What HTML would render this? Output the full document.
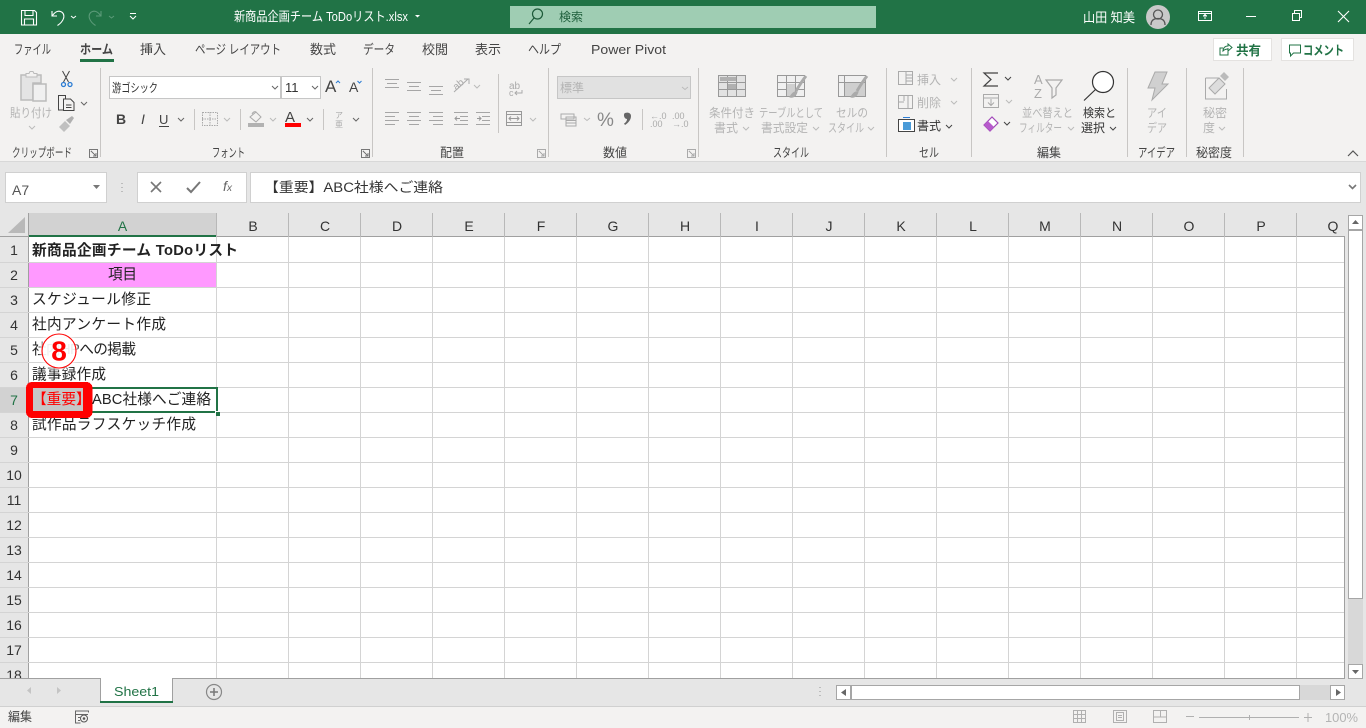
<!DOCTYPE html>
<html lang="ja"><head><meta charset="utf-8"><title>Excel</title>
<style>
html,body{margin:0;padding:0;width:1366px;height:728px;overflow:hidden;background:#fff}
svg{position:absolute;left:0;top:0;display:block}
text{font-family:"Liberation Sans","Noto Sans CJK JP",sans-serif;white-space:pre}
.u{font-size:12.5px;fill:#444}
.t{font-size:13px;fill:#444}
.d{font-size:12px;fill:#b4b4b4}
.c{font-size:14.67px;fill:#222}
.h{font-size:14px;fill:#333;text-anchor:middle}
.l{fill:none;stroke:#444;stroke-width:1}
.g{fill:none;stroke:#a6a6a6;stroke-width:1}
.s{stroke:#c6c6c6;stroke-width:1;fill:none}
.a{fill:none;stroke:#666;stroke-width:1}
.ag{fill:none;stroke:#bbb;stroke-width:1}
</style></head><body>
<svg width="1366" height="728" viewBox="0 0 1366 728" shape-rendering="crispEdges">
<defs><filter id="b" x="-30%" y="-30%" width="160%" height="160%"><feGaussianBlur stdDeviation="1.500"/></filter></defs>
<!-- backgrounds -->
<rect width="1366" height="728" fill="#fff"/>
<rect width="1366" height="34" fill="#217346"/>
<rect y="34" width="1366" height="127" fill="#f3f2f1"/>
<rect y="161" width="1366" height="52" fill="#e6e6e6"/>
<rect y="213" width="1366" height="24" fill="#e6e6e6"/>
<rect y="237" width="28" height="442" fill="#e6e6e6"/>
<rect x="1345" y="213" width="21" height="466" fill="#e6e6e6"/>

<!-- title bar -->
<g shape-rendering="auto">
<g fill="none" stroke="#fff" stroke-width="1.100">
<path d="M21.500 10.500h13l2 2v12.500h-15z"/><path d="M25 10.500v5h8v-5"/><path d="M24.500 25v-6h9v6"/>
<path d="M52 11v5h5M52.500 15.500c2-3 5-5 8-4 3 1 4 4 3 7-1 3-3 5-6 7"/>
<path d="M71 16l2.500 2 2.500-2" stroke-width="1"/>
<g stroke="#5b9a78"><path d="M101 11v5h-5M100.500 15.500c-2-3-5-5-8-4-3 1-4 4-3 7 1 3 3 5 6 7"/><path d="M109 16l2.500 2 2.500-2" stroke-width="1"/></g>
<path d="M130 13.500h6M130 16l3 3 3-3" stroke-width="1"/>
</g>
<text x="234" y="21" font-size="13" fill="#fff" textLength="174" lengthAdjust="spacingAndGlyphs">新商品企画チーム ToDoリスト.xlsx</text>
<path d="M415 15h5l-2.500 2.500z" fill="#fff"/>
</g>
<rect x="510" y="6" width="366" height="22" fill="#9fcdb3"/>
<g shape-rendering="auto">
<circle cx="537.500" cy="14" r="5" fill="none" stroke="#1d5a39" stroke-width="1.200"/><path d="M534 18l-5 6" stroke="#1d5a39" stroke-width="1.200"/>
<text x="559" y="21" font-size="12" fill="#1f5f3c" textLength="24" lengthAdjust="spacingAndGlyphs">検索</text>
<text x="1083" y="22" font-size="13" fill="#fff" textLength="52" lengthAdjust="spacingAndGlyphs">山田 知美</text>
<circle cx="1158" cy="17" r="12" fill="#c9c9c9"/>
<circle cx="1158" cy="14.500" r="4.500" fill="none" stroke="#555" stroke-width="1.300"/>
<path d="M1151 25c0-5 3-6.500 7-6.500s7 1.500 7 6.500" fill="none" stroke="#555" stroke-width="1.300"/>
<path d="M1338 11l11 11M1349 11l-11 11" stroke="#fff" stroke-width="1.100"/>
</g>
<g fill="none" stroke="#fff">
<path d="M1198.500 11.500h13v9h-13zM1198.500 13.500h13"/><path d="M1205 19v-4M1203 16.500l2-2 2 2"/>
<path d="M1246 16.500h10"/>
<path d="M1292.500 13.500h7v7h-7zM1294.500 13v-2.500h7v7h-2"/>
</g>

<!-- tabs -->
<g shape-rendering="auto">
<text class="t" x="14" y="54" textLength="37" lengthAdjust="spacingAndGlyphs">ファイル</text>
<text class="t" x="80" y="54" font-weight="700" textLength="33" lengthAdjust="spacingAndGlyphs">ホーム</text>
<text class="t" x="140" y="54" textLength="26" lengthAdjust="spacingAndGlyphs">挿入</text>
<text class="t" x="195" y="54" textLength="86" lengthAdjust="spacingAndGlyphs">ページ レイアウト</text>
<text class="t" x="310" y="54" textLength="26" lengthAdjust="spacingAndGlyphs">数式</text>
<text class="t" x="363" y="54" textLength="32" lengthAdjust="spacingAndGlyphs">データ</text>
<text class="t" x="422" y="54" textLength="26" lengthAdjust="spacingAndGlyphs">校閲</text>
<text class="t" x="475" y="54" textLength="26" lengthAdjust="spacingAndGlyphs">表示</text>
<text class="t" x="528" y="54" textLength="33" lengthAdjust="spacingAndGlyphs">ヘルプ</text>
<text x="591" y="54" font-size="13" fill="#444" textLength="75" lengthAdjust="spacingAndGlyphs">Power Pivot</text>
</g>
<rect x="80" y="59" width="34" height="3" fill="#217346"/>

<!-- share + comment -->
<rect x="1213.500" y="38.500" width="58" height="22" fill="#fff" stroke="#e4e2e0"/>
<rect x="1281.500" y="38.500" width="72" height="22" fill="#fff" stroke="#e4e2e0"/>
<g shape-rendering="auto">
<path d="M1228 48v7h-8v-7h3M1223 51c0-3 2-5 5-5v-2l4 3.500-4 3.500v-2c-2 0-4 1-5 2z" fill="none" stroke="#217346"/>
<text x="1236" y="55" font-size="13" font-weight="700" fill="#217346" textLength="25" lengthAdjust="spacingAndGlyphs">共有</text>
<path d="M1289.500 45h11v8h-7l-3 3v-3h-1z" fill="none" stroke="#217346"/>
<text x="1303" y="55" font-size="13" font-weight="700" fill="#217346" textLength="41" lengthAdjust="spacingAndGlyphs">コメント</text>
</g>

<!-- ribbon separators -->
<g fill="#c8c6c4">
<rect x="100" y="68" width="1" height="89"/><rect x="372" y="68" width="1" height="89"/><rect x="548" y="68" width="1" height="89"/><rect x="698" y="68" width="1" height="89"/><rect x="886" y="68" width="1" height="89"/><rect x="971" y="68" width="1" height="89"/><rect x="1127" y="68" width="1" height="89"/><rect x="1186" y="68" width="1" height="89"/><rect x="1243" y="68" width="1" height="89"/>
<rect x="498" y="74" width="1" height="59"/>
<rect x="194" y="109" width="1" height="21"/><rect x="240" y="109" width="1" height="21"/><rect x="323" y="109" width="1" height="21"/><rect x="642" y="109" width="1" height="21"/>
</g>

<!-- group labels -->
<g shape-rendering="auto">
<text class="u" x="12" y="157" textLength="60" lengthAdjust="spacingAndGlyphs">クリップボード</text>
<text class="u" x="212" y="157" textLength="33" lengthAdjust="spacingAndGlyphs">フォント</text>
<text class="u" x="440" y="157" textLength="24" lengthAdjust="spacingAndGlyphs">配置</text>
<text class="u" x="603" y="157" textLength="24" lengthAdjust="spacingAndGlyphs">数値</text>
<text class="u" x="773" y="157" textLength="36" lengthAdjust="spacingAndGlyphs">スタイル</text>
<text class="u" x="919" y="157" textLength="20" lengthAdjust="spacingAndGlyphs">セル</text>
<text class="u" x="1037" y="157" textLength="24" lengthAdjust="spacingAndGlyphs">編集</text>
<text class="u" x="1138" y="157" textLength="37" lengthAdjust="spacingAndGlyphs">アイデア</text>
<text class="u" x="1196" y="157" textLength="36" lengthAdjust="spacingAndGlyphs">秘密度</text>
</g>
<!-- launchers -->
<g fill="none" stroke="#777">
<path d="M89.500 149.500h8v8h-8zM91 151l5 5M93 156h3v-3"/>
<path d="M361.500 149.500h8v8h-8zM363 151l5 5M365 156h3v-3"/>
<path d="M537.500 149.500h8v8h-8zM539 151l5 5M541 156h3v-3" stroke="#aaa"/>
<path d="M687.500 149.500h8v8h-8zM689 151l5 5M691 156h3v-3" stroke="#aaa"/>
</g>

<!-- clipboard -->
<g shape-rendering="auto">
<path d="M21 75h20v8h-8v17H21z" fill="#e4e4e4" stroke="#bbb" stroke-width="1.500"/>
<path d="M26 75v-1.500h3l1-2h3l1 2h3V77H26z" fill="#f3f2f1" stroke="#bbb"/>
<rect x="33" y="84" width="13" height="17" fill="#f0f0f0" stroke="#bbb" stroke-width="1.500"/>
<text class="d" x="10" y="117" textLength="42" lengthAdjust="spacingAndGlyphs">貼り付け</text>
<path d="M29 126l3 3 3-3" class="ag"/>
<path d="M62.500 71l6 11M69.500 71l-6 11" stroke="#444" fill="none"/>
<circle cx="63.500" cy="84.500" r="2" fill="none" stroke="#2b7cd3" stroke-width="1.300"/><circle cx="70" cy="84.500" r="2" fill="none" stroke="#2b7cd3" stroke-width="1.300"/>
<path d="M63 110h-4.500V95.500h7v3" class="l" stroke="#333"/>
<path d="M63.500 99h7l3.500 3.500v8h-10.500z" class="l" stroke="#333"/>
<path d="M66 105h5.500M66 107.500h5.500" class="l"/>
<path d="M81 102l3 3 3-3" class="a"/>
<path d="M59 127l6-6 5 5-6 6z" fill="#c0c0c0"/><path d="M66 120l6-4 2 2-4 6z" fill="#b0b0b0"/>

<!-- font boxes -->
<rect x="109.500" y="76.500" width="171" height="22" fill="#fff" stroke="#c6c6c6" shape-rendering="crispEdges"/>
<rect x="281.500" y="76.500" width="39" height="22" fill="#fff" stroke="#c6c6c6" shape-rendering="crispEdges"/>
<text x="112" y="92" font-size="12" fill="#333" textLength="46" lengthAdjust="spacingAndGlyphs">游ゴシック</text>
<text x="285" y="92" font-size="13" fill="#333">11</text>
<path d="M272 86l3 3 3-3M312 86l3 3 3-3" class="a" stroke-width="1.200"/>
<text x="325" y="92" font-size="17" fill="#444">A</text>
<path d="M336 83l2-2 2 2" fill="none" stroke="#2b7cd3"/>
<text x="349" y="92" font-size="14" fill="#444">A</text>
<path d="M357.500 81l2 2 2-2" fill="none" stroke="#2b7cd3"/>

<text x="116" y="124" font-size="14" font-weight="700" fill="#444">B</text>
<text x="141" y="124" font-size="14" font-style="italic" fill="#444" font-family="Liberation Serif">I</text>
<text x="159" y="124" font-size="13" fill="#444">U</text>
<path d="M159 126.500h10" stroke="#444"/>
<path d="M178 118l3 3 3-3" class="a" stroke-width="1.200"/>
<rect x="202.500" y="112.500" width="15" height="13" fill="none" stroke="#aaa" stroke-dasharray="1.500 1"/>
<path d="M210 112v13M202 119h15" stroke="#aaa" stroke-dasharray="1.500 1"/>
<path d="M224 118l3 3 3-3" class="ag"/>
<path d="M250 117l6-5 5 5-5 5z" fill="none" stroke="#aaa"/><path d="M252 114c1-2 3-3 4-2" fill="none" stroke="#aaa"/>
<rect x="248" y="123" width="16" height="4" fill="#b2b2b2"/>
<path d="M270 118l3 3 3-3" class="ag"/>
<text x="285" y="122" font-size="15" fill="#444">A</text>
<rect x="285" y="123" width="16" height="4" fill="#f00"/>
<path d="M307 118l3 3 3-3" class="a" stroke-width="1.200"/>
<text x="335" y="118" font-size="8" fill="#aaa">ア</text>
<text x="335" y="127" font-size="8" fill="#aaa">亜</text>
<path d="M353 118l3 3 3-3" class="a" stroke-width="1.200"/>
</g>

<!-- alignment -->
<g stroke="#a6a6a6" fill="none">
<path d="M385 79.500h14M387 83.500h10M385 87.500h14"/>
<path d="M407 82.500h14M409 86.500h10M407 90.500h14"/>
<path d="M429 86.500h14M431 90.500h10M429 94.500h14"/>
<path d="M385 112.500h14M385 116.500h10M385 120.500h14M385 124.500h10"/>
<path d="M407 112.500h14M409 116.500h10M407 120.500h14M409 124.500h10"/>
<path d="M429 112.500h14M433 116.500h10M429 120.500h14M433 124.500h10"/>
<path d="M454 112.500h14M460 116.500h8M460 120.500h8M454 124.500h14"/>
<path d="M476 112.500h14M482 116.500h8M482 120.500h8M476 124.500h14"/>
<rect x="506.500" y="111.500" width="15" height="14" stroke="#999"/><path d="M507 114.500h14M507 122.500h14" stroke="#999"/>
</g>
<g shape-rendering="auto">
<path d="M509 118.500h10M511 116.500l-2 2 2 2M517 116.500l2 2-2 2" fill="none" stroke="#999"/>
<path d="M455 118.500h5M457 116.500l-2 2 2 2M477 118.500h4M479 116.500l2 2-2 2" fill="none" stroke="#999"/>
<path d="M454 92l14-13M464 79h5v5" fill="none" stroke="#aaa"/>
<text x="453" y="88" font-size="10" fill="#aaa" transform="rotate(-40 458 85)">ab</text>
<path d="M474 85l3 3 3-3" class="ag"/>
<text x="509" y="89" font-size="10" fill="#aaa">ab</text>
<text x="509" y="96" font-size="9" fill="#aaa">c</text>
<path d="M522 90v3h-7M517 91l-2 2 2 2" fill="none" stroke="#aaa"/>
<path d="M530 118l3 3 3-3" class="ag"/>

<!-- number -->
<rect x="557.500" y="76.500" width="133" height="22" fill="#e1e1e1" stroke="#c6c6c6" shape-rendering="crispEdges"/>
<text class="d" x="560" y="92" textLength="24" lengthAdjust="spacingAndGlyphs">標準</text>
<path d="M682 87l3 2.500 3-2.500" class="ag"/>
<path d="M561 114h13v5h-13zM566 117h10v9h-10zM566 120.500h10M566 123h10" fill="none" stroke="#aaa"/>
<path d="M584 118l3 2.500 3-2.500" class="ag"/>
<text x="597" y="126" font-size="19" fill="#888">%</text>
<path d="M625 113c3-1 6 0 6 3 0 4-3 7-6 9l-1-1.500c2-1 3-3 3-4.500-3 0-4-5-2-6z" fill="#666"/>
<text x="650" y="119" font-size="9" fill="#aaa">←.0</text><text x="650" y="127" font-size="9" fill="#aaa">.00</text>
<text x="672" y="119" font-size="9" fill="#aaa">.00</text><text x="672" y="127" font-size="9" fill="#aaa">→.0</text>

<!-- styles -->
<text class="d" x="709" y="117" textLength="46" lengthAdjust="spacingAndGlyphs">条件付き</text>
<text class="d" x="714" y="132" textLength="24" lengthAdjust="spacingAndGlyphs">書式</text>
<path d="M743 127l3 3 3-3" class="ag"/>
<text class="d" x="759" y="117" textLength="64" lengthAdjust="spacingAndGlyphs">テーブルとして</text>
<text class="d" x="761" y="132" textLength="47" lengthAdjust="spacingAndGlyphs">書式設定</text>
<path d="M813 127l3 3 3-3" class="ag"/>
<text class="d" x="836" y="117" textLength="32" lengthAdjust="spacingAndGlyphs">セルの</text>
<text class="d" x="828" y="132" textLength="36" lengthAdjust="spacingAndGlyphs">スタイル</text>
<path d="M868 127l3 3 3-3" class="ag"/>
</g>
<g fill="none" stroke="#999">
<rect x="718.500" y="75.500" width="27" height="21" fill="#e2e2e2"/><path d="M718 82.500h27M718 89.500h27M727.500 75v21M736.500 75v21"/>
<rect x="777.500" y="75.500" width="27" height="21" fill="#f0f0f0"/><path d="M777 82.500h27M777 89.500h27M786.500 75v21M795.500 75v21"/>
<rect x="838.500" y="75.500" width="27" height="21" fill="#f0f0f0"/><path d="M838 82.500h27M844.500 75v21"/>
</g>
<rect x="720" y="77" width="16" height="4" fill="#b0b0b0"/><rect x="728" y="84" width="8" height="5" fill="#b0b0b0"/>
<rect x="787" y="84" width="8" height="12" fill="#cfcfcf"/><rect x="845" y="83" width="20" height="13" fill="#cfcfcf"/>
<g shape-rendering="auto" fill="none">
<path d="M806 76c-4 5-7 10-10 15" stroke="#aaa" stroke-width="3"/><path d="M790 97c2-4 5-6 7-5-1 4-4 6-7 5z" fill="#aaa" stroke="#aaa"/>
<path d="M867 76c-4 5-7 10-10 15" stroke="#aaa" stroke-width="3"/><path d="M851 97c2-4 5-6 7-5-1 4-4 6-7 5z" fill="#aaa" stroke="#aaa"/>
</g>

<!-- cells -->
<g fill="none" stroke="#aaa">
<rect x="898.500" y="71.500" width="14" height="13"/><path d="M906 71v13M906 78h7M906 75h7M906 81h7"/>
<rect x="898.500" y="95.500" width="14" height="13"/><path d="M898 102h6M904 95v6M908 95v14"/>
</g>
<g shape-rendering="auto">
<text class="d" x="917" y="84" textLength="24" lengthAdjust="spacingAndGlyphs">挿入</text>
<text class="d" x="917" y="107" textLength="24" lengthAdjust="spacingAndGlyphs">削除</text>
<path d="M951 78l3 3 3-3M951 101l3 3 3-3" class="ag"/>
<text x="917" y="130" font-size="12" fill="#333" textLength="24" lengthAdjust="spacingAndGlyphs">書式</text>
<path d="M946 125l3 3 3-3" class="l" stroke-width="1.200"/>
</g>
<rect x="898.500" y="119.500" width="16" height="12" fill="#fff" stroke="#444"/>
<rect x="903" y="122" width="8" height="8" fill="#4a9bd8"/>
<path d="M903 117.500h7" stroke="#2b7cd3"/>

<!-- editing -->
<g shape-rendering="auto">
<path d="M998 73h-14l7 6.500-7 6.500h14" fill="none" stroke="#444" stroke-width="1.200"/>
<path d="M1005 77l3 3 3-3" class="l" stroke-width="1.200"/>
<rect x="983.500" y="94.500" width="15" height="13" fill="none" stroke="#aaa"/><path d="M983 98h15" stroke="#aaa"/>
<path d="M991 99v6M988 102.500l3 3 3-3" fill="none" stroke="#aaa"/>
<path d="M1006 100l3 3 3-3" class="ag"/>
<path d="M984 125l8-8 6 6-8 8z" fill="#fff" stroke="#a148b8" stroke-width="1.200"/><path d="M984 125l4-4 6 6-4 4z" fill="#b75bcc"/>
<path d="M1004 122l3 3 3-3" class="l" stroke-width="1.200"/>
<text x="1034" y="84" font-size="13" fill="#aaa">A</text><text x="1034" y="98" font-size="13" fill="#aaa">Z</text>
<path d="M1046 80h16l-6 8v7l-4 3v-10z" fill="none" stroke="#aaa" stroke-width="1.200"/>
<text class="d" x="1022" y="117" textLength="51" lengthAdjust="spacingAndGlyphs">並べ替えと</text>
<text class="d" x="1019" y="132" textLength="43" lengthAdjust="spacingAndGlyphs">フィルター</text>
<path d="M1068 127l3 3 3-3" class="ag"/>
<circle cx="1103" cy="82" r="10.500" fill="#fff" stroke="#333" stroke-width="1.200"/>
<path d="M1095.500 89.500l-11.500 11" stroke="#333" stroke-width="1.200"/>
<text x="1083" y="117" font-size="12" fill="#333" textLength="33" lengthAdjust="spacingAndGlyphs">検索と</text>
<text x="1081" y="132" font-size="12" fill="#333" textLength="24" lengthAdjust="spacingAndGlyphs">選択</text>
<path d="M1110 127l3 3 3-3" class="l" stroke-width="1.200"/>

<!-- ideas -->
<path d="M1155 72h12l-5 12h6l-16 16 3-12h-7z" fill="#d0d0d0" stroke="#aaa"/>
<text class="d" x="1147" y="117" textLength="20" lengthAdjust="spacingAndGlyphs">アイ</text>
<text class="d" x="1147" y="132" textLength="20" lengthAdjust="spacingAndGlyphs">デア</text>
<!-- sensitivity -->
<path d="M1205.500 78h13M1205.500 78v21h21V89" fill="none" stroke="#aaa"/>
<path d="M1209 88l10-10 6 6-10 10z" fill="#ddd" stroke="#aaa"/><path d="M1220 76l4-4 5 5-4 4z" fill="#bbb"/>
<text class="d" x="1203" y="117" textLength="24" lengthAdjust="spacingAndGlyphs">秘密</text>
<text class="d" x="1203" y="132" textLength="12" lengthAdjust="spacingAndGlyphs">度</text>
<path d="M1219 127l3 3 3-3" class="ag"/>
<path d="M1348 156l5-5 5 5" fill="none" stroke="#555" stroke-width="1.200"/>
</g>

<!-- formula bar -->
<rect y="161" width="1366" height="1" fill="#d8d8d8"/>
<rect x="5.500" y="172.500" width="101" height="30" fill="#fff" stroke="#d0d0d0"/>
<rect x="137.500" y="172.500" width="109" height="30" fill="#fff" stroke="#d0d0d0"/>
<rect x="250.500" y="172.500" width="1110" height="30" fill="#fff" stroke="#d0d0d0"/>
<g shape-rendering="auto">
<text x="12" y="195" font-size="14" fill="#555">A7</text>
<path d="M93 185h7l-3.500 4z" fill="#777"/>
<path d="M122 183v1M122 187v1M122 191v1" stroke="#aaa" stroke-width="1.400"/>
<path d="M151 182l10 10M161 182l-10 10" stroke="#777" stroke-width="1.600" fill="none"/>
<path d="M187 188l4 4 9-10" stroke="#777" stroke-width="2" fill="none"/>
<text x="223" y="191" font-size="14" font-style="italic" fill="#666" font-family="Liberation Serif">f</text>
<text x="227" y="191" font-size="10" font-style="italic" fill="#666" font-family="Liberation Serif">x</text>
<text x="264" y="192" font-size="13.400" fill="#333" textLength="179" lengthAdjust="spacingAndGlyphs">【重要】ABC社様へご連絡</text>
<path d="M1349 185l3.500 3.500 3.500-3.500" fill="none" stroke="#777" stroke-width="1.600"/>
</g>

<!-- column header -->
<path d="M25 233V217l-17 16z" fill="#b9b9b9" shape-rendering="auto"/>
<rect x="29" y="213" width="188" height="22" fill="#d2d2d2"/>
<rect x="29" y="235" width="188" height="2" fill="#217346"/>
<rect x="217" y="236" width="1128" height="1" fill="#a0a0a0"/>
<rect x="28" y="213" width="1" height="466" fill="#a0a0a0"/>
<rect y="236" width="28" height="1" fill="#a0a0a0"/>
<g fill="#b8b8b8">
<rect x="216" y="213" width="1" height="24"/><rect x="288" y="213" width="1" height="24"/><rect x="360" y="213" width="1" height="24"/><rect x="432" y="213" width="1" height="24"/><rect x="504" y="213" width="1" height="24"/><rect x="576" y="213" width="1" height="24"/><rect x="648" y="213" width="1" height="24"/><rect x="720" y="213" width="1" height="24"/><rect x="792" y="213" width="1" height="24"/><rect x="864" y="213" width="1" height="24"/><rect x="936" y="213" width="1" height="24"/><rect x="1008" y="213" width="1" height="24"/><rect x="1080" y="213" width="1" height="24"/><rect x="1152" y="213" width="1" height="24"/><rect x="1224" y="213" width="1" height="24"/><rect x="1296" y="213" width="1" height="24"/>
</g>
<g shape-rendering="auto">
<text class="h" x="122.500" y="231" style="fill:#217346">A</text>
<text class="h" x="253" y="231">B</text><text class="h" x="325" y="231">C</text><text class="h" x="397" y="231">D</text><text class="h" x="469" y="231">E</text><text class="h" x="541" y="231">F</text><text class="h" x="613" y="231">G</text><text class="h" x="685" y="231">H</text><text class="h" x="757" y="231">I</text><text class="h" x="829" y="231">J</text><text class="h" x="901" y="231">K</text><text class="h" x="973" y="231">L</text><text class="h" x="1045" y="231">M</text><text class="h" x="1117" y="231">N</text><text class="h" x="1189" y="231">O</text><text class="h" x="1261" y="231">P</text><text class="h" x="1333" y="231">Q</text>
</g>

<!-- grid -->
<g fill="#d4d4d4">
<rect x="216" y="237" width="1" height="441"/><rect x="288" y="237" width="1" height="441"/><rect x="360" y="237" width="1" height="441"/><rect x="432" y="237" width="1" height="441"/><rect x="504" y="237" width="1" height="441"/><rect x="576" y="237" width="1" height="441"/><rect x="648" y="237" width="1" height="441"/><rect x="720" y="237" width="1" height="441"/><rect x="792" y="237" width="1" height="441"/><rect x="864" y="237" width="1" height="441"/><rect x="936" y="237" width="1" height="441"/><rect x="1008" y="237" width="1" height="441"/><rect x="1080" y="237" width="1" height="441"/><rect x="1152" y="237" width="1" height="441"/><rect x="1224" y="237" width="1" height="441"/><rect x="1296" y="237" width="1" height="441"/>
<rect x="0" y="262" width="1344" height="1"/><rect x="0" y="287" width="1344" height="1"/><rect x="0" y="312" width="1344" height="1"/><rect x="0" y="337" width="1344" height="1"/><rect x="0" y="362" width="1344" height="1"/><rect x="0" y="387" width="1344" height="1"/><rect x="0" y="412" width="1344" height="1"/><rect x="0" y="437" width="1344" height="1"/><rect x="0" y="462" width="1344" height="1"/><rect x="0" y="487" width="1344" height="1"/><rect x="0" y="512" width="1344" height="1"/><rect x="0" y="537" width="1344" height="1"/><rect x="0" y="562" width="1344" height="1"/><rect x="0" y="587" width="1344" height="1"/><rect x="0" y="612" width="1344" height="1"/><rect x="0" y="637" width="1344" height="1"/><rect x="0" y="662" width="1344" height="1"/>
</g>
<rect x="1344" y="237" width="1" height="442" fill="#a0a0a0"/>
<rect y="388" width="28" height="24" fill="#d2d2d2"/>
<rect x="29" y="263" width="187" height="24" fill="#ff99ff"/>

<!-- row numbers -->
<g shape-rendering="auto">
<text class="h" x="14" y="255">1</text><text class="h" x="14" y="280">2</text><text class="h" x="14" y="305">3</text><text class="h" x="14" y="330">4</text><text class="h" x="14" y="355">5</text><text class="h" x="14" y="380">6</text><text class="h" x="14" y="405" style="fill:#217346">7</text><text class="h" x="14" y="430">8</text><text class="h" x="14" y="455">9</text><text class="h" x="14" y="480">10</text><text class="h" x="14" y="505">11</text><text class="h" x="14" y="530">12</text><text class="h" x="14" y="555">13</text><text class="h" x="14" y="580">14</text><text class="h" x="14" y="605">15</text><text class="h" x="14" y="630">16</text><text class="h" x="14" y="655">17</text><text class="h" x="14" y="680">18</text>

<!-- cells -->
<text class="c" x="32" y="255" font-weight="700" textLength="206" lengthAdjust="spacing">新商品企画チーム ToDoリスト</text>
<text class="c" x="108" y="279" textLength="29" lengthAdjust="spacing">項目</text>
<text class="c" x="32" y="304" textLength="119" lengthAdjust="spacing">スケジュール修正</text>
<text class="c" x="32" y="329" textLength="134" lengthAdjust="spacing">社内アンケート作成</text>
<text class="c" x="32" y="354" textLength="104" lengthAdjust="spacing">社内HPへの掲載</text>
<text class="c" x="32" y="379" textLength="74" lengthAdjust="spacing">議事録作成</text>
<text class="c" x="32" y="429" textLength="164" lengthAdjust="spacing">試作品ラフスケッチ作成</text>
</g>

<!-- selected cell -->
<rect x="28" y="387" width="190" height="2" fill="#217346"/>
<rect x="28" y="411" width="190" height="2" fill="#217346"/>
<rect x="216" y="387" width="2" height="26" fill="#217346"/>
<rect x="28" y="387" width="2" height="26" fill="#217346"/>
<rect x="215" y="411" width="5" height="5" fill="#fff"/>
<rect x="216" y="412" width="4" height="4" fill="#217346"/>

<!-- red highlight -->
<rect x="26" y="382" width="66.500" height="36" rx="6" fill="#f00"/>
<rect x="33" y="388" width="50" height="23" fill="#c6c6c6"/>
<g shape-rendering="auto">
<text x="32" y="404" font-size="14.670" fill="#f00">【重要】</text>
<text class="c" x="92" y="404" textLength="119" lengthAdjust="spacing">ABC社様へご連絡</text>

<!-- badge -->
<circle cx="59" cy="351" r="19" fill="#fff" fill-opacity=".8" filter="url(#b)"/>
<circle cx="59" cy="351" r="17" fill="#fff" fill-opacity=".6" stroke="#f00" stroke-width="1.100"/>
<text x="59" y="360.500" font-size="28" font-weight="700" fill="#f00" text-anchor="middle">8</text>
</g>

<!-- vertical scrollbar -->
<rect x="1348" y="215" width="15" height="464" fill="#d8d8d8"/>
<rect x="1348.500" y="215.500" width="14" height="14" fill="#fff" stroke="#a6a6a6"/>
<rect x="1348.500" y="230.500" width="14" height="368" fill="#fff" stroke="#a6a6a6"/>
<rect x="1348.500" y="664.500" width="14" height="14" fill="#fff" stroke="#a6a6a6"/>
<path d="M1352 224h7l-3.500-4z" fill="#666" shape-rendering="auto"/>
<path d="M1352 670h7l-3.500 4z" fill="#666" shape-rendering="auto"/>

<!-- tab bar -->
<rect y="679" width="1366" height="27" fill="#e6e6e6"/>
<rect y="678" width="1345" height="1" fill="#a0a0a0"/>
<rect x="100" y="678" width="73" height="25" fill="#fff"/>
<rect x="100" y="678" width="1" height="23" fill="#a0a0a0"/>
<rect x="172" y="678" width="1" height="23" fill="#a0a0a0"/>
<rect x="100" y="701" width="73" height="2" fill="#217346"/>
<g shape-rendering="auto">
<text x="114" y="696" font-size="13" fill="#217346" textLength="45" lengthAdjust="spacingAndGlyphs">Sheet1</text>
<path d="M31 687v7l-4-3.500zM57 687v7l4-3.500z" fill="#c4c4c4"/>
<circle cx="214" cy="692" r="7.500" fill="none" stroke="#888" stroke-width="1.200"/>
<path d="M210 692h8M214 688v8" stroke="#777" stroke-width="1.500"/>
<path d="M820 687v1M820 691v1M820 695v1" stroke="#aaa" stroke-width="1.400"/>
</g>
<!-- horizontal scrollbar -->
<rect x="836" y="685" width="509" height="15" fill="#d8d8d8"/>
<rect x="836.500" y="685.500" width="14" height="14" fill="#fff" stroke="#a6a6a6"/>
<rect x="851.500" y="685.500" width="448" height="14" fill="#fff" stroke="#a6a6a6"/>
<rect x="1330.500" y="685.500" width="14" height="14" fill="#fff" stroke="#a6a6a6"/>
<path d="M846 689v7l-5-3.500zM1336 689v7l5-3.500z" fill="#666" shape-rendering="auto"/>

<!-- status bar -->
<rect y="706" width="1366" height="22" fill="#f3f2f1"/>
<rect y="706" width="1366" height="1" fill="#d0d0d0"/>
<g shape-rendering="auto">
<text class="u" x="8" y="721" textLength="24" lengthAdjust="spacingAndGlyphs">編集</text>
<text x="1325" y="722" font-size="13" fill="#b4b4b4" textLength="33" lengthAdjust="spacingAndGlyphs">100%</text>
<circle cx="84" cy="718.500" r="3.500" fill="none" stroke="#555"/><circle cx="84" cy="718.500" r="1.300" fill="#555"/>
</g>
<g fill="none" stroke="#666">
<path d="M88.500 712.500v-1.500h-13v12h5M76 714.500h12M78 717.500h2M78 720.500h2"/>
</g>
<g fill="none" stroke="#b0b0b0">
<rect x="1073.500" y="710.500" width="12" height="12"/><path d="M1077.500 710v13M1081.500 710v13M1073 714.500h13M1073 718.500h13"/>
<rect x="1113.500" y="710.500" width="13" height="12"/><rect x="1116.500" y="712.500" width="7" height="8"/><path d="M1118 715.500h4M1118 717.500h4"/>
<rect x="1153.500" y="710.500" width="13" height="12"/><path d="M1160.500 710v7h-7M1160.500 717h6" stroke-width="1"/>
<path d="M1186 716.500h8M1199 717.500h100M1249.500 715v5M1304 717.500h8M1308 713v9"/>
</g>
</svg>
</body></html>
